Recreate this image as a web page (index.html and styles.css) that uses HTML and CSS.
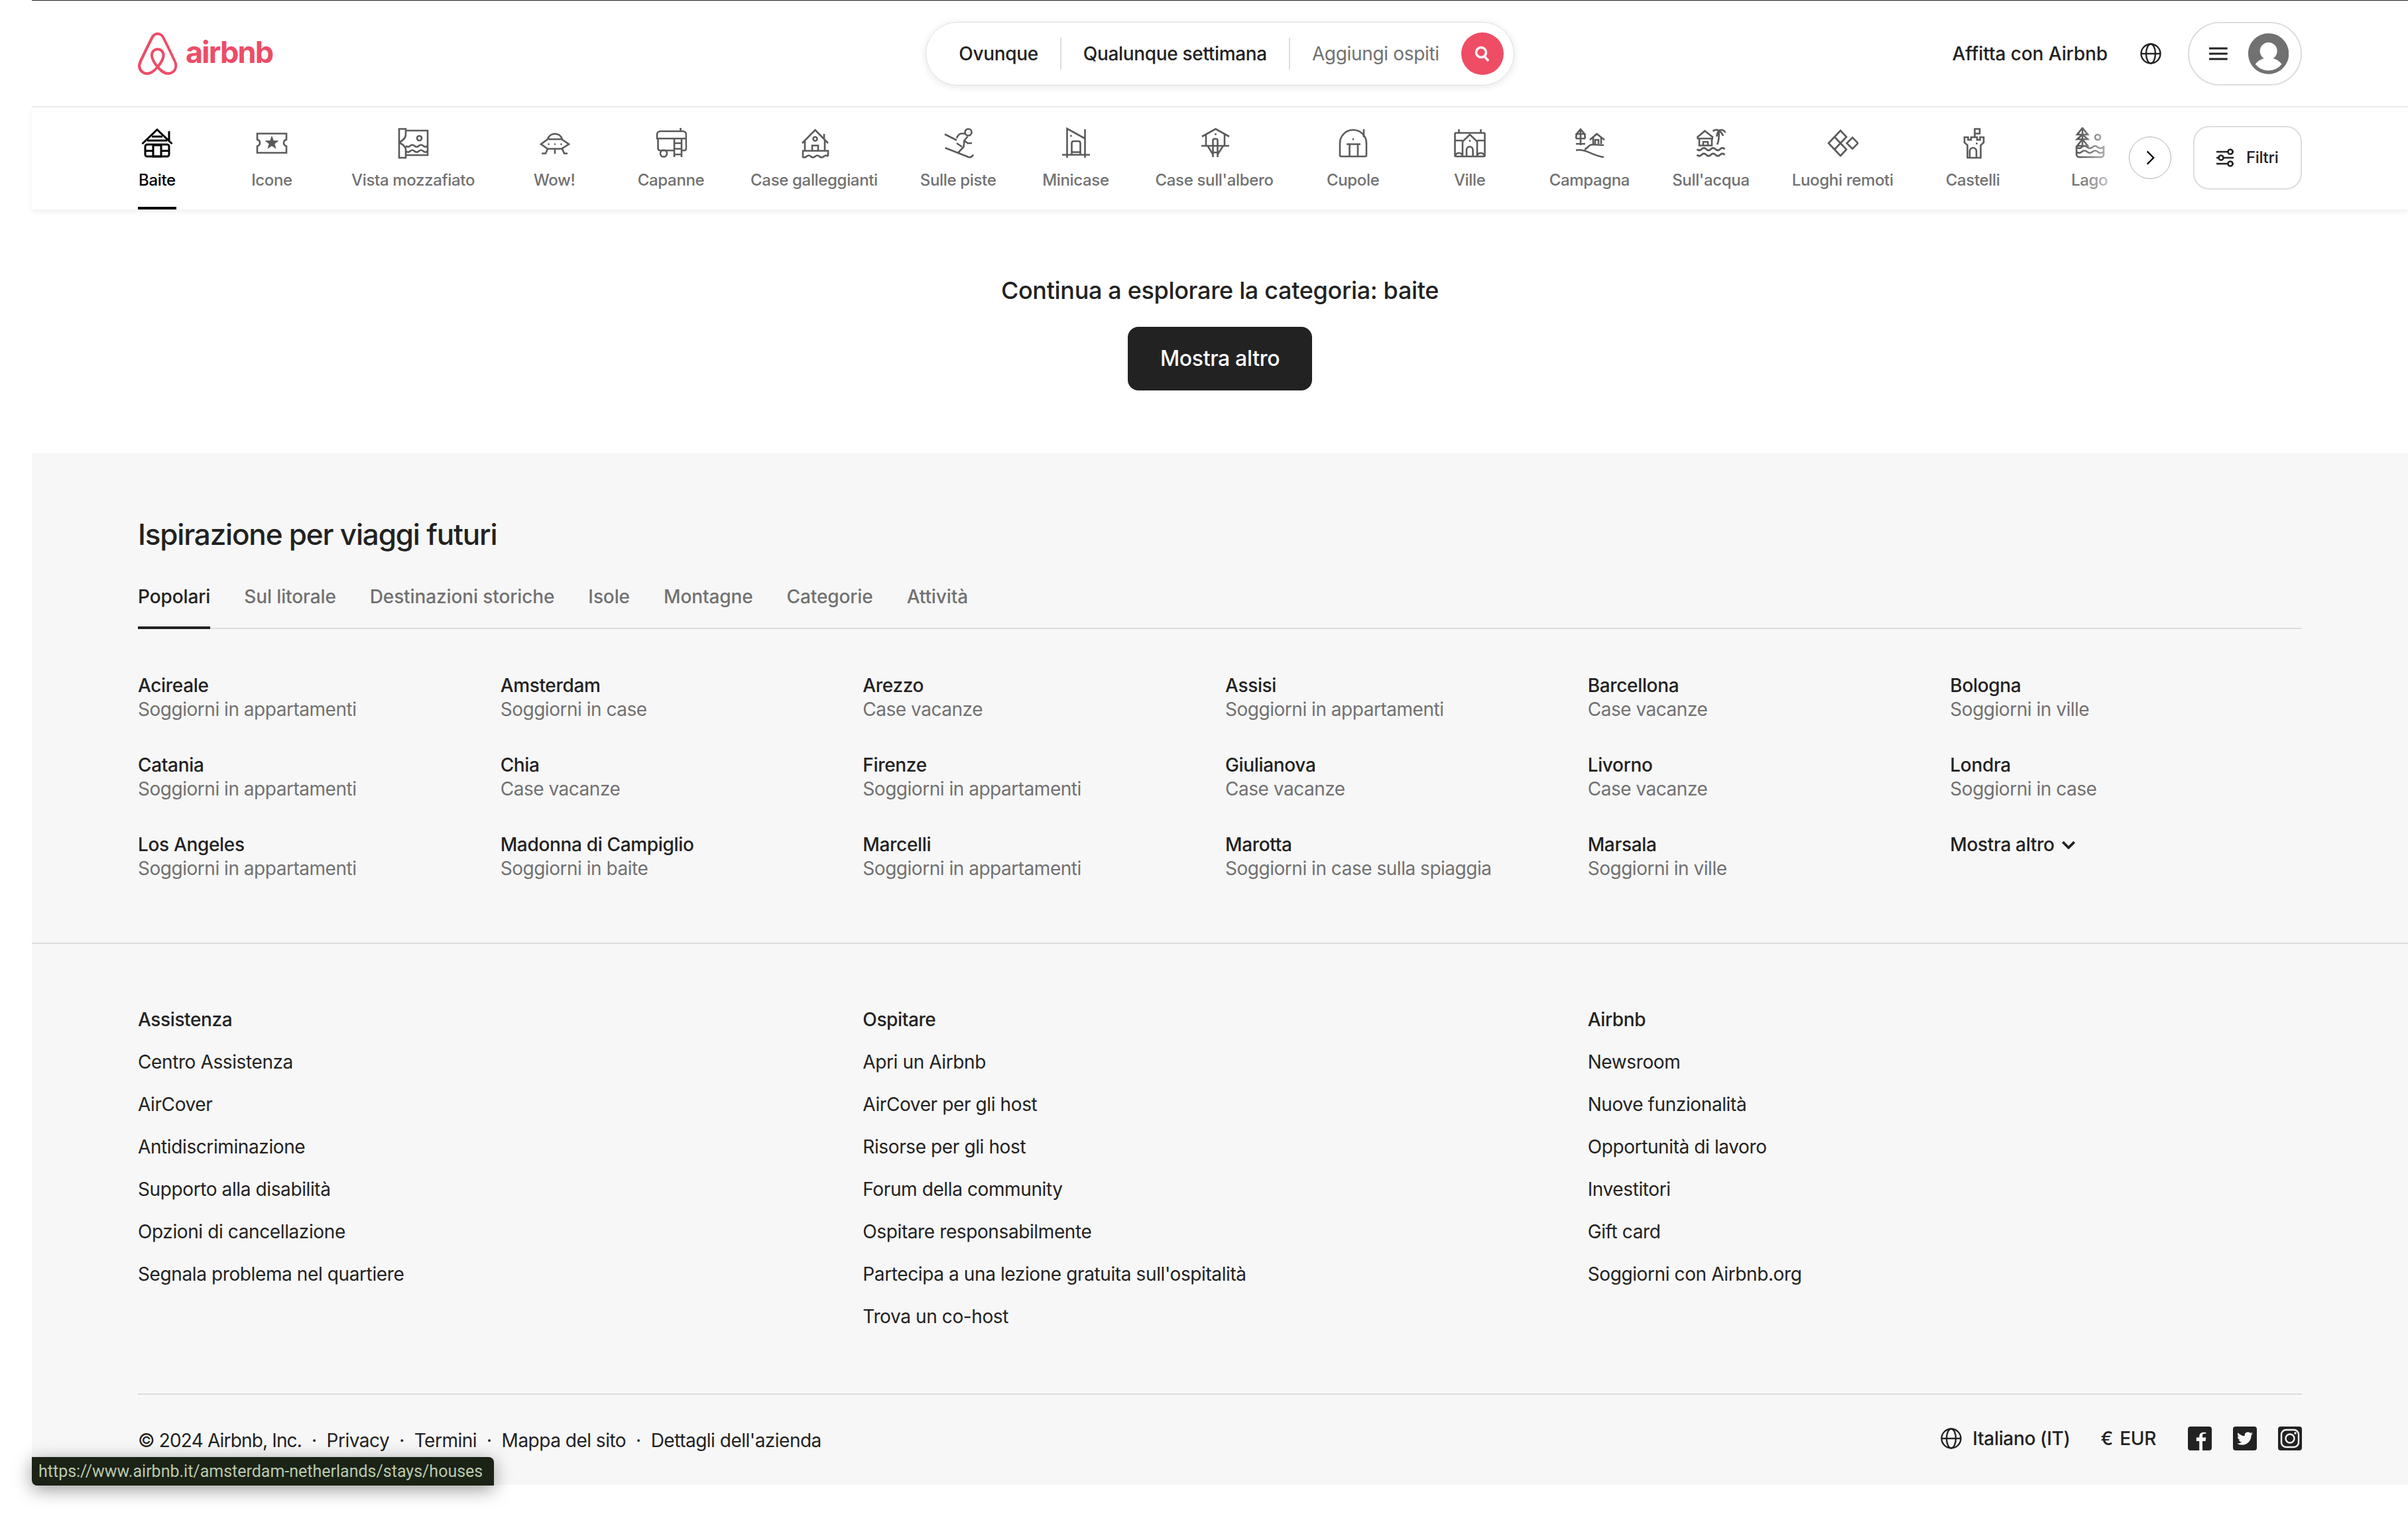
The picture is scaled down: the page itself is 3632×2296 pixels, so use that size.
FILE: index.html
```html
<!DOCTYPE html>
<html lang="it">
<head>
  <meta charset="utf-8">
  <title>Baite - Airbnb</title>
  <link rel="stylesheet" href="styles.css">
</head>
<body>
  <div class="page">
    <header class="topbar">
      <a class="logo">
        <svg class="logo-mark" viewBox="0 0 30 32"><path d="M29.24 22.68c-.16-.39-.31-.8-.47-1.15l-.74-1.67-.03-.03c-2.2-4.8-4.55-9.68-7.04-14.48l-.1-.2c-.25-.47-.5-.99-.76-1.47-.32-.57-.63-1.18-1.14-1.76a5.3 5.3 0 00-8.2 0c-.47.58-.82 1.19-1.14 1.76-.25.52-.5 1.03-.76 1.5l-.1.2c-2.45 4.8-4.84 9.68-7.04 14.48l-.06.06c-.22.52-.48 1.06-.73 1.64-.16.35-.32.73-.48 1.15a6.8 6.8 0 007.2 9.23 8.38 8.38 0 003.18-1.1c1.3-.73 2.55-1.79 3.95-3.32 1.4 1.53 2.68 2.59 3.95 3.33A8.38 8.38 0 0022.75 32a6.79 6.79 0 006.75-5.83 5.94 5.94 0 00-.26-3.5zm-14.36 1.66c-1.72-2.2-2.84-4.22-3.22-5.95a5.2 5.2 0 01-.1-1.96c.07-.51.26-.96.52-1.34.6-.87 1.65-1.41 2.8-1.41a3.3 3.3 0 012.8 1.4c.26.4.45.84.51 1.35.1.58.06 1.25-.1 1.96-.38 1.7-1.5 3.71-3.21 5.95zm12.74 1.48a4.76 4.76 0 01-2.9 3.75c-.76.32-1.6.41-2.42.32-.8-.1-1.6-.36-2.42-.84a15.64 15.64 0 01-3.63-3.1c2.1-2.6 3.37-4.97 3.85-7.08.23-1 .26-1.9.16-2.73a5.53 5.53 0 00-.86-2.2 5.36 5.36 0 00-4.49-2.28c-1.85 0-3.5.86-4.5 2.27a5.18 5.18 0 00-.85 2.21c-.13.84-.1 1.77.16 2.73.48 2.11 1.78 4.51 3.85 7.1a14.33 14.33 0 01-3.63 3.12c-.83.48-1.62.73-2.42.83a4.76 4.76 0 01-5.32-4.07c-.1-.8-.03-1.6.29-2.5.1-.32.25-.64.41-1.02.22-.52.48-1.06.73-1.6l.04-.07c2.2-4.77 4.55-9.65 7-14.42l.1-.2c.25-.48.5-.99.76-1.47.26-.51.54-1 .9-1.4a3.32 3.32 0 015.09 0c.35.4.64.89.9 1.4.25.48.5 1 .76 1.47l.1.2c2.44 4.77 4.8 9.65 7 14.42l.03.03c.26.52.48 1.1.73 1.6.16.39.32.7.42 1.03.19.9.29 1.7.19 2.5z"/></svg>
        <span class="logo-word">airbnb</span>
      </a>

      <div class="search">
        <span class="search-item">Ovunque</span>
        <span class="search-item">Qualunque settimana</span>
        <span class="search-item search-guests">Aggiungi ospiti</span>
        <span class="search-btn">
          <svg viewBox="0 0 24 24"><circle cx="10" cy="10" r="7.500"/><path d="M15 16l6 7"/></svg>
        </span>
      </div>

      <div class="top-right">
        <span class="host-link">Affitta con Airbnb</span>
        <svg class="globe" viewBox="0 0 32 32"><circle cx="16" cy="16" r="14.5"/><ellipse cx="16" cy="16" rx="7" ry="14.5"/><path d="M1.5 16h29"/></svg>
        <div class="user-menu">
          <svg class="burger" viewBox="0 0 28 20"><path d="M0 2h28M0 10h28M0 18h28"/></svg>
          <svg class="avatar" viewBox="0.7 0.7 30.6 30.6"><path d="M16 .7C7.56.7.7 7.56.7 16S7.56 31.3 16 31.3 31.3 24.44 31.3 16 24.44.7 16 .7zm0 28c-4.02 0-7.6-1.88-9.93-4.81a12.43 12.43 0 0 1 6.45-4.4A6.5 6.5 0 0 1 9.5 14a6.5 6.5 0 0 1 13 0 6.51 6.51 0 0 1-3.02 5.5 12.42 12.42 0 0 1 6.45 4.4A12.67 12.67 0 0 1 16 28.7z"/></svg>
        </div>
      </div>
    </header>

    <nav class="catbar">
      <div class="cats-wrap">
        <div class="cats">
          <a class="cat cat-on">
            <svg viewBox="0 0 48 48"><path d="M1.5 25L24 3.5 46.5 25M42 6v15M16 14h16M9 20h30"/><rect x="6" y="26" width="36" height="18" rx="3"/><path d="M6 35.5h12M30 35.5h12"/><rect x="18" y="27" width="12" height="17"/></svg>
            <span>Baite</span>
          </a>
          <a class="cat">
            <svg viewBox="0 0 48 48"><path d="M2 9.5h44v9c-3 1-4 3-4 5s1 4 4 5v10H2v-10c3-1 4-3 4-5s-1-4-4-5z"/><polygon class="solid" points="24,12.5 26.8,20 34.5,20.3 28.4,25 30.5,32.5 24,28.2 17.5,32.5 19.6,25 13.5,20.3 21.2,20"/></svg>
            <span>Icone</span>
          </a>
          <a class="cat">
            <svg viewBox="0 0 48 48"><path d="M13 5h33v37H13M3 2.500h10V11c0 5-3 8-10 12zM3 23c6 3 10 6 10 11v12H3z"/><circle cx="33.500" cy="16.500" r="3.500"/><path d="M13 28q3.300 3 6.600 0t6.600 0 6.600 0 6.600 0 6.600 0M13 36q3.300 3 6.600 0t6.600 0 6.600 0 6.600 0 6.600 0"/></svg>
            <span>Vista mozzafiato</span>
          </a>
          <a class="cat">
            <svg viewBox="0 0 48 48"><path d="M14 18a11.500 11.500 0 0 1 22 0M14 18h21l11 7.500-11 7H14l-10-7zM25 32.500V40M14 32.500L11 39.500H5M36 32.500l3 7h5"/><circle class="solid" cx="15.500" cy="25.500" r="1.300"/><circle class="solid" cx="25" cy="25.500" r="1.300"/><circle class="solid" cx="34.500" cy="25.500" r="1.300"/></svg>
            <span>Wow!</span>
          </a>
          <a class="cat">
            <svg viewBox="0 0 48 48"><path d="M3 17v-6a5 5 0 0 1 5-5h34a5 5 0 0 1 5 5v6zM38.500 1v5M4.500 17v15a3 3 0 0 0 3 3h21.500M47 17v15a3 3 0 0 1-3 3h-4M29 17v28M40 17v28M29 24h11M29 32.500h11M29 41h11"/><circle cx="13" cy="39.500" r="5"/></svg>
            <span>Capanne</span>
          </a>
          <a class="cat">
            <svg viewBox="0 0 48 48"><path d="M6 24L25.500 4 45 24M39 10v8M10 20v16M40 20v16M21 36V27.500h9V36M6 35.500h39v8M7 35.500v8M6 44q3.200 3 6.500 0t6.500 0 6.500 0 6.500 0 6.500 0 6.500 0"/><circle cx="25.500" cy="17.500" r="3"/></svg>
            <span>Case galleggianti</span>
          </a>
          <a class="cat">
            <svg viewBox="0 0 48 48"><path d="M4 10.500L22 19.500M4.500 31L40 45c3 1 5 0 7-3.500"/><circle cx="39.500" cy="7.500" r="5"/><path d="M35 9.500h-6c-3 0-5 2-7 7M38.500 14l-5 6 5 4h6.500M33.500 20l-1 9.500-8 8.500M22 24l8 5.500"/></svg>
            <span>Sulle piste</span>
          </a>
          <a class="cat">
            <svg viewBox="0 0 48 48"><path d="M4 41.500h42M11.500 46V2l27 15M38.500 3v43M18.500 41V24c0-2 1-3 3-3h7c2 0 3 1 3 3v17M18.500 37.500h13"/><circle class="solid" cx="17.500" cy="13" r="1.400"/></svg>
            <span>Minicase</span>
          </a>
          <a class="cat">
            <svg viewBox="0 0 48 48"><path d="M5 14L25.500 2.500 46 14M11 11v17M39 11v17M4 28h42M21.500 45V20c0-1.500 1-2.500 2-2.500h3c1 0 2 1 2 2.500v25M13.500 28l8 13M37 28l-8.500 13M21.500 38h7"/><circle class="solid" cx="25.500" cy="10.500" r="1.400"/></svg>
            <span>Case sull'albero</span>
          </a>
          <a class="cat">
            <svg viewBox="0 0 48 48"><path d="M4 24a20 20 0 0 1 40 0v18a2 2 0 0 1-2 2H6a2 2 0 0 1-2-2zM40 3v12M14 25.500h21M18.500 25.500V44M31 25.500V44"/><circle class="solid" cx="24" cy="18" r="1.400"/></svg>
            <span>Cupole</span>
          </a>
          <a class="cat">
            <svg viewBox="0 0 48 48"><rect x="1.500" y="8.500" width="45" height="35.500" rx="1.500"/><path d="M7.500 3v5.500M40.500 3v5.500M13 44V21.500L24 11l11 10.500V44M1.500 20H13M35 20h11.500M19 44V34a4.800 4.800 0 0 1 9.600 0v10M2 44c1-7 10-7 11 0M35 44c1-7 10-7 11 0"/><circle class="solid" cx="24" cy="20.500" r="1.400"/></svg>
            <span>Ville</span>
          </a>
          <a class="cat">
            <svg viewBox="0 0 48 48"><path d="M11 3v24M11 3l6 7H5zM4 17h14M4 25h14M5 10l-1 7M17 10l1 7M25 19L35.500 10 47 19M30 15v10M42 15v10M33 25v-6h5v6M17 33c4 0 6-7 12-7l17 1M4 34.500c18-2 22 8 42 10.500"/></svg>
            <span>Campagna</span>
          </a>
          <a class="cat">
            <svg viewBox="0 0 48 48"><path d="M3.500 15.500L15.500 5.500 28 15.500M3.500 17h24.500M7 17v10.500h19V17M13 27v-5h7v5M34 26c3-6 3-14 2.500-21M36.500 5c-4-2-7-1-9 1M36.500 5c4-2 8-1 10 3M36.500 6c-2 2-3 5-3 8M37 6c3 1 5 4 6 7"/><path d="M3.500 33q3.500 3.500 7 0t7 0 7 0 7 0 7 0 7 0M3.500 41.500q3.500 3.500 7 0t7 0 7 0 7 0 7 0 7 0"/></svg>
            <span>Sull'acqua</span>
          </a>
          <a class="cat">
            <svg viewBox="0 0 48 48"><path d="M21 5l9 9.500-9 9.500-9-9.500zM12 14.500L3 24l9 9.500L21 24M21 24l9 9.500-9 9.500-9-9.500M39 15.500l8.500 8.500-8.500 8.500-8.500-8.500z"/></svg>
            <span>Luoghi remoti</span>
          </a>
          <a class="cat">
            <svg viewBox="0 0 48 48"><path d="M26.500 15V2.500H34v7h-7.500M11 15h5.500v4H21v-4h9v4h4.500v-4H40v8l-4.500 4v19H15.500V27L11 23zM19 46V36a5 5 0 0 1 10 0v10"/><circle class="solid" cx="29.500" cy="24.500" r="1.400"/></svg>
            <span>Castelli</span>
          </a>
          <a class="cat">
            <svg viewBox="0 0 48 48"><path d="M13 1v27M13 1l8 10H5zM13 11l8 7H5zM13 18l8 10H5z"/><circle cx="36" cy="15" r="4"/><path d="M4 28v13a4 4 0 0 0 4 4h33a4 4 0 0 0 4-4V28M4 30q4 3.500 8 0t8 0 8 0 8 0 9 0M4 37q4 3.500 8 0t8 0 8 0 8 0 9 0"/></svg>
            <span>Lago</span>
          </a>
        </div>
        <div class="cats-fade"></div>
        <button class="cats-next">
          <svg viewBox="0 0 16 24"><path d="M3 1l11 11L3 23"/></svg>
        </button>
      </div>
      <button class="filters">
        <svg viewBox="0 0 28 32"><path d="M1 7h18M25 7h2M1 16h4M11 16h16M1 25h18M25 25h2"/><circle cx="22" cy="7" r="3.500"/><circle cx="8" cy="16" r="3.500"/><circle cx="22" cy="25" r="3.500"/></svg>
        <span>Filtri</span>
      </button>
    </nav>

    <section class="more">
      <h2>Continua a esplorare la categoria: baite</h2>
      <button class="more-btn">Mostra altro</button>
    </section>

    <footer class="foot">
      <section class="inspire">
        <h2>Ispirazione per viaggi futuri</h2>
        <div class="tabs">
          <a class="tab tab-on">Popolari</a>
          <a class="tab">Sul litorale</a>
          <a class="tab">Destinazioni storiche</a>
          <a class="tab">Isole</a>
          <a class="tab">Montagne</a>
          <a class="tab">Categorie</a>
          <a class="tab">Attività</a>
        </div>
        <div class="places">
          <a class="place"><b>Acireale</b><span>Soggiorni in appartamenti</span></a>
          <a class="place"><b>Amsterdam</b><span>Soggiorni in case</span></a>
          <a class="place"><b>Arezzo</b><span>Case vacanze</span></a>
          <a class="place"><b>Assisi</b><span>Soggiorni in appartamenti</span></a>
          <a class="place"><b>Barcellona</b><span>Case vacanze</span></a>
          <a class="place"><b>Bologna</b><span>Soggiorni in ville</span></a>
          <a class="place"><b>Catania</b><span>Soggiorni in appartamenti</span></a>
          <a class="place"><b>Chia</b><span>Case vacanze</span></a>
          <a class="place"><b>Firenze</b><span>Soggiorni in appartamenti</span></a>
          <a class="place"><b>Giulianova</b><span>Case vacanze</span></a>
          <a class="place"><b>Livorno</b><span>Case vacanze</span></a>
          <a class="place"><b>Londra</b><span>Soggiorni in case</span></a>
          <a class="place"><b>Los Angeles</b><span>Soggiorni in appartamenti</span></a>
          <a class="place"><b>Madonna di Campiglio</b><span>Soggiorni in baite</span></a>
          <a class="place"><b>Marcelli</b><span>Soggiorni in appartamenti</span></a>
          <a class="place"><b>Marotta</b><span>Soggiorni in case sulla spiaggia</span></a>
          <a class="place"><b>Marsala</b><span>Soggiorni in ville</span></a>
          <a class="place place-more"><b>Mostra altro</b>
            <svg viewBox="0 0 20 12"><path d="M2 2l8 8 8-8"/></svg>
          </a>
        </div>
      </section>

      <section class="sitemap">
        <div class="sitemap-cols">
          <ul>
            <li class="head">Assistenza</li>
            <li>Centro Assistenza</li>
            <li>AirCover</li>
            <li>Antidiscriminazione</li>
            <li>Supporto alla disabilità</li>
            <li>Opzioni di cancellazione</li>
            <li>Segnala problema nel quartiere</li>
          </ul>
          <ul>
            <li class="head">Ospitare</li>
            <li>Apri un Airbnb</li>
            <li>AirCover per gli host</li>
            <li>Risorse per gli host</li>
            <li>Forum della community</li>
            <li>Ospitare responsabilmente</li>
            <li>Partecipa a una lezione gratuita sull'ospitalità</li>
            <li>Trova un co-host</li>
          </ul>
          <ul>
            <li class="head">Airbnb</li>
            <li>Newsroom</li>
            <li>Nuove funzionalità</li>
            <li>Opportunità di lavoro</li>
            <li>Investitori</li>
            <li>Gift card</li>
            <li>Soggiorni con Airbnb.org</li>
          </ul>
        </div>

        <div class="legal">
          <div class="legal-left">
            <span class="copy">© 2024 Airbnb, Inc.</span><i>·</i>
            <span>Privacy</span><i>·</i>
            <span>Termini</span><i>·</i>
            <span>Mappa del sito</span><i>·</i>
            <span>Dettagli dell'azienda</span>
          </div>
          <div class="legal-right">
            <svg class="globe" viewBox="0 0 32 32"><circle cx="16" cy="16" r="14.5"/><ellipse cx="16" cy="16" rx="7" ry="14.5"/><path d="M1.5 16h29"/></svg>
            <span class="lang">Italiano (IT)</span>
            <span class="curr">€&nbsp;&nbsp;EUR</span>
            <div class="socials">
              <svg viewBox="0 0 36 36"><rect class="sq" width="36" height="36" rx="4"/><path class="ink" d="M22 36V22h4.600l.7-5.500H22v-3.200c0-1.600.5-2.500 2.800-2.500h2.600V8.900c-.5 0-2-.2-3.800-.2-3.800 0-6.400 2.200-6.400 6.400v1.400h-4.400V22h4.400v14z"/></svg>
              <svg viewBox="0 0 36 36"><rect class="sq" width="36" height="36" rx="4"/><path class="ink" transform="translate(6 6)" d="M23.950 4.570a10 10 0 01-2.820.77 4.960 4.960 0 002.160-2.720c-.95.55-2 .95-3.120 1.180a4.920 4.920 0 00-8.380 4.480C7.690 8.090 4.070 6.130 1.640 3.160a4.820 4.820 0 00-.66 2.470c0 1.710.87 3.210 2.190 4.100a4.900 4.900 0 01-2.230-.61v.06c0 2.380 1.690 4.370 3.950 4.830a5 5 0 01-2.210.08 4.940 4.940 0 004.600 3.420A9.870 9.870 0 010 19.540a14 14 0 007.560 2.210c9.050 0 14-7.500 14-13.980 0-.21 0-.42-.02-.63a9.940 9.940 0 002.460-2.550z"/></svg>
              <svg viewBox="0 0 36 36"><rect class="sq" width="36" height="36" rx="4"/><rect class="line" x="5" y="5" width="26" height="26" rx="7"/><circle class="line" cx="18" cy="18" r="6.500"/><circle class="ink" cx="26" cy="10" r="1.800"/></svg>
            </div>
          </div>
        </div>
      </section>
    </footer>
  </div>

  <div class="status">https://www.airbnb.it/amsterdam-netherlands/stays/houses</div>
</body>
</html>
```

FILE: styles.css
```css
* {
  box-sizing: border-box;
}

html, body {
  margin: 0;
  padding: 0;
  background: #fff;
}

body {
  font-family: Inter, "Noto Sans", sans-serif;
  font-size: 28px;
  line-height: 36px;
  color: #222;
  letter-spacing: -0.012em;
  height: 2296px;
  overflow: hidden;
  position: relative;
}

h2 {
  margin: 0;
  font-weight: 500;
}

ul {
  list-style: none;
  margin: 0;
  padding: 0;
}

button {
  font: inherit;
  letter-spacing: inherit;
  background: #fff;
  cursor: pointer;
}

svg {
  display: block;
  fill: none;
  stroke: currentColor;
}

.page {
  margin-left: 48px;
}

/* top bar */
.topbar {
  display: grid;
  grid-template-columns: 1fr auto 1fr;
  align-items: center;
  height: 162px;
  padding: 0 160px;
  border-top: 1px solid #222;
  border-bottom: 2px solid #ebebeb;
}

.logo {
  display: flex;
  align-items: center;
  gap: 12px;
  color: #ed4c67;
}

.logo-mark {
  width: 60px;
  height: 64px;
  fill: currentColor;
  stroke: none;
}

.logo-word {
  margin-bottom: 4px;
  font-size: 45px;
  font-weight: 700;
  letter-spacing: -0.04em;
}

.search {
  display: flex;
  align-items: center;
  height: 96px;
  padding: 0 15px 0 16px;
  border: 1px solid #ddd;
  border-radius: 48px;
  box-shadow: 0 2px 12px rgba(0, 0, 0, 0.1);
  font-weight: 500;
}

.search-item {
  padding: 0 33px;
  line-height: 48px;
  border-right: 2px solid #ddd;
  white-space: nowrap;
}

.search-guests {
  border-right: 0;
  font-weight: 400;
  color: #717171;
}

.search-btn {
  display: flex;
  align-items: center;
  justify-content: center;
  width: 64px;
  height: 64px;
  border-radius: 50%;
  background: #ee4d65;
  color: #fff;
}

.search-btn svg {
  width: 24px;
  height: 24px;
  stroke-width: 3.5;
}

.top-right {
  display: flex;
  align-items: center;
  justify-content: flex-end;
}

.host-link {
  font-weight: 500;
  letter-spacing: -0.003em;
}

.top-right .globe {
  margin: 0 40px 0 49px;
}

.globe {
  width: 32px;
  height: 32px;
  stroke-width: 2.4;
}

.user-menu {
  display: flex;
  align-items: center;
  gap: 31px;
  width: 172px;
  height: 96px;
  padding: 0 18px 0 30px;
  border: 2px solid #ddd;
  border-radius: 48px;
}

.burger {
  width: 28px;
  height: 20px;
  stroke-width: 3;
}

.avatar {
  width: 62px;
  height: 62px;
  fill: #717171;
  stroke: none;
}

/* category strip */
.catbar {
  display: flex;
  gap: 32px;
  height: 154px;
  padding: 0 160px;
  box-shadow: 0 4px 8px rgba(0, 0, 0, 0.06);
  position: relative;
}

.cats-wrap {
  flex: 1;
  min-width: 0;
  position: relative;
  overflow: hidden;
}

.cats {
  display: flex;
  gap: 64px;
  margin-left: -27px;
}

.cat {
  display: flex;
  flex-direction: column;
  align-items: center;
  flex: none;
  min-width: 112px;
  height: 154px;
  padding-top: 30px;
  color: #717171;
  font-size: 24px;
  font-weight: 500;
  white-space: nowrap;
}

.cat svg {
  width: 48px;
  height: 48px;
  margin-bottom: 14px;
  color: #5a5a5a;
  stroke-width: 2.6;
}

.cat .solid {
  fill: currentColor;
  stroke: none;
}

.cat-on {
  margin-right: -3px;
  color: #000;
}

.cat-on::after {
  content: "";
  width: 58px;
  height: 4px;
  margin-top: auto;
  background: #000;
}

.cat-on svg {
  color: #000;
  stroke-width: 3;
}

.cats-fade {
  position: absolute;
  top: 0;
  right: 0;
  bottom: 0;
  width: 140px;
  background: linear-gradient(to right, rgba(255, 255, 255, 0), #fff 55%);
}

.cats-next {
  position: absolute;
  top: 44px;
  right: 1px;
  display: flex;
  align-items: center;
  justify-content: center;
  width: 64px;
  height: 64px;
  padding: 0;
  border: 1px solid #b0b0b0;
  border-radius: 50%;
  color: #000;
}

.cats-next svg {
  width: 14px;
  height: 24px;
  stroke-width: 2.6;
}

.filters {
  flex: none;
  display: flex;
  align-items: center;
  gap: 18px;
  align-self: flex-start;
  width: 164px;
  height: 96px;
  margin-top: 28px;
  padding: 0 32px;
  border: 2px solid #ddd;
  border-radius: 24px;
  color: #222;
  font-size: 24px;
  font-weight: 500;
}

.filters svg {
  width: 28px;
  height: 32px;
  stroke-width: 2.6;
}

/* show more */
.more {
  display: flex;
  flex-direction: column;
  align-items: center;
  gap: 33px;
  height: 368px;
  padding-top: 100px;
}

.more h2 {
  font-size: 36px;
  line-height: 44px;
}

.more-btn {
  width: 278px;
  height: 96px;
  border: 0;
  border-radius: 16px;
  background: #222;
  color: #fff;
  font-size: 32px;
  font-weight: 500;
}

/* grey footer */
.foot {
  height: 1556px;
  background: #f7f7f7;
}

.inspire {
  height: 740px;
  padding: 94px 160px 0;
  border-bottom: 2px solid #ddd;
}

.inspire h2 {
  font-size: 44px;
  line-height: 56px;
  letter-spacing: -0.027em;
}

.tabs {
  display: flex;
  gap: 51px;
  margin-top: 48px;
  border-bottom: 2px solid #ddd;
  letter-spacing: -0.004em;
}

.tab {
  padding-bottom: 27px;
  margin-bottom: -2px;
  border-bottom: 4px solid transparent;
  color: #717171;
  font-weight: 500;
}

.tab-on {
  color: #222;
  border-bottom-color: #222;
}

.places {
  display: grid;
  grid-template-columns: repeat(6, 1fr);
  gap: 48px 16px;
  margin-top: 67px;
}

.place {
  display: block;
}

.place b {
  display: block;
  font-weight: 500;
}

.place span {
  display: block;
  color: #717171;
  letter-spacing: -0.017em;
}

.place-more {
  display: flex;
  align-items: flex-start;
  gap: 10px;
}

.place-more svg {
  width: 22px;
  height: 13px;
  margin-top: 12px;
  stroke-width: 3.5;
}

.sitemap {
  padding: 96px 160px 0;
}

.sitemap-cols {
  display: grid;
  grid-template-columns: repeat(3, 1fr);
  gap: 16px;
  height: 582px;
  letter-spacing: -0.014em;
}

.sitemap-cols li {
  margin-top: 28px;
}

.sitemap-cols li.head {
  margin-top: 0;
  font-weight: 500;
}

.legal {
  display: flex;
  justify-content: space-between;
  align-items: center;
  height: 134px;
  border-top: 2px solid #ddd;
}

.legal-left {
  display: flex;
  gap: 15px;
  padding-top: 5px;
  letter-spacing: -0.018em;
}

.copy {
  letter-spacing: -0.03em;
}

.legal-left i {
  font-style: normal;
}

.legal-right {
  display: flex;
  align-items: center;
  font-weight: 500;
}

.lang {
  margin-left: 16px;
}

.curr {
  margin-left: 46px;
  word-spacing: -2px;
}

.socials {
  display: flex;
  gap: 32px;
  margin-left: 48px;
}

.socials svg {
  width: 36px;
  height: 36px;
  stroke: none;
}

.sq {
  fill: #222;
}

.ink {
  fill: #f7f7f7;
}

.socials .line {
  fill: none;
  stroke: #f7f7f7;
  stroke-width: 2.4;
}

/* browser link preview */
.status {
  position: absolute;
  left: 48px;
  top: 2198px;
  width: 697px;
  height: 43px;
  padding-left: 10px;
  background: #1b2216;
  color: #b9c9ae;
  border-radius: 0 8px 0 8px;
  box-shadow: 0 6px 28px rgba(0, 0, 0, 0.4);
  font-family: Roboto, sans-serif;
  font-size: 25px;
  line-height: 43px;
  letter-spacing: 0;
  white-space: nowrap;
}
```
